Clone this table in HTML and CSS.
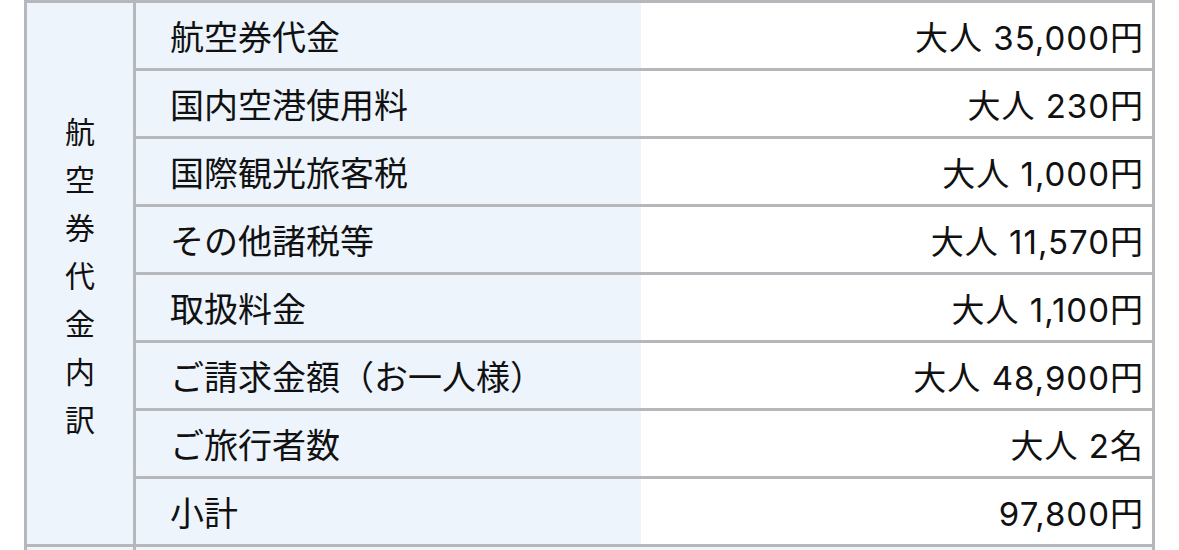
FILE: index.html
```html
<!DOCTYPE html>
<html lang="ja">
<head>
<meta charset="utf-8">
<link rel="stylesheet" href="styles.css">
</head>
<body>
<table class="fare">
  <tbody>
    <tr>
      <th class="group" rowspan="8">
        <div class="vert"><span>航</span><span>空</span><span>券</span><span>代</span><span>金</span><span>内</span><span>訳</span></div>
      </th>
      <th class="label">航空券代金</th>
      <td class="value">大人 35,000円</td>
    </tr>
    <tr><th class="label">国内空港使用料</th><td class="value">大人 230円</td></tr>
    <tr><th class="label">国際観光旅客税</th><td class="value">大人 1,000円</td></tr>
    <tr><th class="label">その他諸税等</th><td class="value">大人 11,570円</td></tr>
    <tr><th class="label">取扱料金</th><td class="value">大人 1,100円</td></tr>
    <tr><th class="label">ご請求金額（お一人様）</th><td class="value">大人 48,900円</td></tr>
    <tr><th class="label">ご旅行者数</th><td class="value">大人 2名</td></tr>
    <tr><th class="label">小計</th><td class="value">97,800円</td></tr>
    <tr class="next"><th class="group"></th><th class="label"></th><td class="value"></td></tr>
  </tbody>
</table>
</body>
</html>
```
FILE: styles.css
```css
html, body {
  margin: 0;
  padding: 0;
  background: #ffffff;
  overflow: hidden;
}
body {
  font-family: "Noto Sans CJK JP", sans-serif;
  color: #111111;
}
.fare {
  margin-left: 24px;
  border-collapse: collapse;
  table-layout: fixed;
  width: 1131px;
}
.fare th, .fare td {
  border: 3px solid #b5b7ba;
  padding: 0;
  font-weight: normal;
}
.fare tr {
  height: 68px;
}
.group {
  width: 106px;
  background: #edf4fc;
  vertical-align: middle;
}
.vert {
  display: flex;
  flex-direction: column;
  align-items: center;
  font-size: 30px;
  line-height: 48px;
}
.label {
  width: 471px;
  background: #edf4fc;
  text-align: left;
  padding-left: 34px !important;
  font-size: 34px;
  border-right: none !important;
}
.value {
  background: #ffffff;
  text-align: right;
  padding-right: 8px !important;
  font-family: "Inter", "Noto Sans CJK JP", sans-serif;
  font-size: 33px;
  letter-spacing: 1px;
  border-left: none !important;
}
.next th, .next td {
  background: #edf4fc;
}
```
